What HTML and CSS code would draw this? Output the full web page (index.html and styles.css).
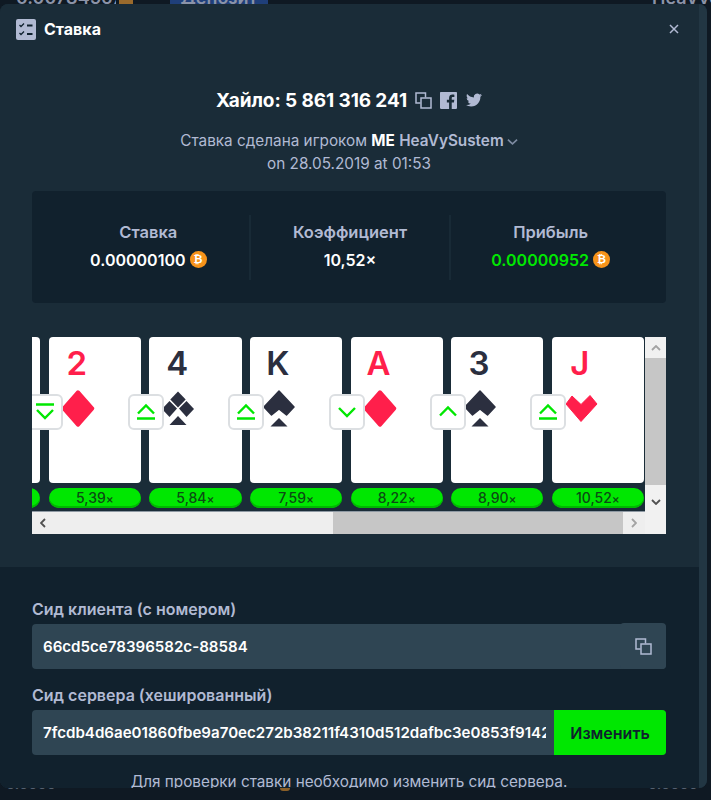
FILE: index.html
```html
<!DOCTYPE html>
<html lang="ru">
<head>
<meta charset="utf-8">
<title>Ставка</title>
<link rel="stylesheet" href="styles.css">
</head>
<body>
<svg class="defs" width="0" height="0" aria-hidden="true">
  <symbol id="diamond" viewBox="0 0 34 37"><path d="M17 2 31.500 18.500 17 35 2.500 18.500Z" fill="currentColor" stroke="currentColor" stroke-width="3.500" stroke-linejoin="round"/></symbol>
  <symbol id="heart" viewBox="0 0 34 37"><path d="M8 6 17 14.500 26 5.500 33 14 17 31.500 2 14Z" fill="currentColor" stroke="currentColor" stroke-width="1" stroke-linejoin="round"/></symbol>
  <symbol id="spade" viewBox="0 0 34 37"><path d="M17 1 32 17 24.500 25 17 19 9.500 25 2 17Z" fill="currentColor" stroke="currentColor" stroke-width="1.500" stroke-linejoin="round"/><path d="M17 28 25.500 36.500H8.500Z" fill="currentColor"/></symbol>
  <symbol id="club" viewBox="0 0 34 37"><g fill="currentColor"><path d="M17 1.500 24.700 9.500 17 17.500 9.300 9.500Z"/><path d="M8.500 11 16 18.500 8.500 27 1 19Z"/><path d="M25.500 11 33 19 25.500 27 18 18.500Z"/><path d="M17 26 25.500 35H8.500Z"/></g></symbol>
  <symbol id="up-bar" viewBox="0 0 36 36"><path d="M10 19.500 18 11.500 26 19.500M9 24.500H27" fill="none" stroke="currentColor" stroke-width="2.400"/></symbol>
  <symbol id="down-bar" viewBox="0 0 36 36"><path d="M10 16 18 24 26 16M9 10.500H27" fill="none" stroke="currentColor" stroke-width="2.400"/></symbol>
  <symbol id="up" viewBox="0 0 36 36"><path d="M10 21.500 18 13.500 26 21.500" fill="none" stroke="currentColor" stroke-width="2.400"/></symbol>
  <symbol id="down" viewBox="0 0 36 36"><path d="M10 14 18 22 26 14" fill="none" stroke="currentColor" stroke-width="2.400"/></symbol>
  <symbol id="copy" viewBox="0 0 17 17"><path d="M5.500 11H1V1H10.500V5.500" fill="none" stroke="currentColor" stroke-width="1.500"/><rect x="6" y="6" width="10" height="10" fill="none" stroke="currentColor" stroke-width="1.500"/></symbol>
</svg>

<div class="backdrop">
  <div class="topbar">
    <span class="balance"><span>0.00784567</span></span>
    <span class="top-coin"></span>
    <span class="deposit"><span>Депозит</span></span>
    <span class="user"><span>HeaVySu</span></span>
  </div>
  <div class="bottombar">
    <span class="bottom-left">0.0000</span>
    <span class="bottom-coin"></span>
    <span class="bottom-right">0.0000</span>
  </div>
</div>

<main class="modal">
  <div class="modal-body">
    <div class="upper">
      <header class="modal-head">
        <div class="modal-title">
          <svg class="title-icon" viewBox="0 0 20 21">
            <rect width="20" height="21" rx="2" fill="#b1bad3"/>
            <path d="M3.500 6 5 7.500 8 4.500M3.500 14 5 15.500 8 12.500" fill="none" stroke="#0f212e" stroke-width="1.300"/>
            <path d="M11 6.500H16.500M11 15H16.500" stroke="#0f212e" stroke-width="2"/>
          </svg>
          <span>Ставка</span>
        </div>
        <svg class="close" viewBox="0 0 10 10"><path d="M1 1 9 9M9 1 1 9" stroke="#b1bad3" stroke-width="1.500"/></svg>
      </header>

      <div class="game-line">
        <h1>Хайло: 5 861 316 241</h1>
        <svg class="share"><use href="#copy"/></svg>
        <svg class="share" viewBox="0 0 24 24"><path fill="#b1bad3" d="M22.675 0H1.325C.593 0 0 .593 0 1.325v21.351C0 23.407.593 24 1.325 24H12.820v-9.294H9.692v-3.622h3.128V8.413c0-3.100 1.893-4.788 4.659-4.788 1.325 0 2.463.099 2.795.143v3.240l-1.918.001c-1.504 0-1.795.715-1.795 1.763v2.313h3.587l-.467 3.622h-3.120V24h6.116c.730 0 1.323-.593 1.323-1.324V1.325C24 .593 23.407 0 22.675 0z"/></svg>
        <svg class="share share-tw" viewBox="0 0 24 24"><path fill="#b1bad3" d="M23.953 4.570a10 10 0 01-2.825.775 4.958 4.958 0 002.163-2.723c-.951.555-2.005.959-3.127 1.184a4.920 4.920 0 00-8.384 4.482C7.690 8.095 4.067 6.130 1.640 3.162a4.822 4.822 0 00-.666 2.475c0 1.710.870 3.213 2.188 4.096a4.904 4.904 0 01-2.228-.616v.060a4.923 4.923 0 003.946 4.827 4.996 4.996 0 01-2.212.085 4.936 4.936 0 004.604 3.417 9.867 9.867 0 01-6.102 2.105c-.390 0-.779-.023-1.170-.067a13.995 13.995 0 007.557 2.209c9.053 0 13.998-7.496 13.998-13.985 0-.210 0-.420-.015-.630A9.935 9.935 0 0024 4.590z"/></svg>
      </div>

      <p class="byline">Ставка сделана игроком <b class="me">ME</b> <b class="player">HeaVySustem</b><svg class="caret" viewBox="0 0 12 8"><path d="M1 1.500 6 6 11 1.500" fill="none" stroke="#7c8aa0" stroke-width="1.800"/></svg></p>
      <p class="date">on 28.05.2019 at 01:53</p>

      <section class="stats">
        <div class="stat">
          <div class="stat-label">Ставка</div>
          <div class="stat-value">0.00000100<span class="coin">₿</span></div>
        </div>
        <div class="stat">
          <div class="stat-label">Коэффициент</div>
          <div class="stat-value">10,52×</div>
        </div>
        <div class="stat">
          <div class="stat-label">Прибыль</div>
          <div class="stat-value stat-win">0.00000952<span class="coin">₿</span></div>
        </div>
      </section>

      <section class="scroller">
        <div class="hand">
          <div class="slot">
            <div class="card"><span class="rank">9</span><svg class="suit"><use href="#spade"/></svg></div>
            <div class="pill">4,85<small>×</small></div>
          </div>
          <div class="slot">
            <div class="card red"><span class="rank">2</span><svg class="suit"><use href="#diamond"/></svg>
              <span class="guess"><svg><use href="#down-bar"/></svg></span></div>
            <div class="pill">5,39<small>×</small></div>
          </div>
          <div class="slot">
            <div class="card"><span class="rank">4</span><svg class="suit"><use href="#club"/></svg>
              <span class="guess"><svg><use href="#up-bar"/></svg></span></div>
            <div class="pill">5,84<small>×</small></div>
          </div>
          <div class="slot">
            <div class="card"><span class="rank">K</span><svg class="suit"><use href="#spade"/></svg>
              <span class="guess"><svg><use href="#up-bar"/></svg></span></div>
            <div class="pill">7,59<small>×</small></div>
          </div>
          <div class="slot">
            <div class="card red"><span class="rank">A</span><svg class="suit"><use href="#diamond"/></svg>
              <span class="guess"><svg><use href="#down"/></svg></span></div>
            <div class="pill">8,22<small>×</small></div>
          </div>
          <div class="slot">
            <div class="card"><span class="rank">3</span><svg class="suit"><use href="#spade"/></svg>
              <span class="guess"><svg><use href="#up"/></svg></span></div>
            <div class="pill">8,90<small>×</small></div>
          </div>
          <div class="slot">
            <div class="card red"><span class="rank">J</span><svg class="suit"><use href="#heart"/></svg>
              <span class="guess"><svg><use href="#up-bar"/></svg></span></div>
            <div class="pill">10,52<small>×</small></div>
          </div>
        </div>
        <div class="vbar">
          <span class="sb-btn"><svg viewBox="0 0 10 6"><path d="M1 5 5 1 9 5" fill="none" stroke="#a3a3a3" stroke-width="1.800"/></svg></span>
          <span class="vthumb"></span>
          <span class="sb-end"><svg viewBox="0 0 10 6"><path d="M1 1 5 5 9 1" fill="none" stroke="#505050" stroke-width="1.800"/></svg></span>
        </div>
        <div class="hbar">
          <span class="sb-left"><svg viewBox="0 0 6 10"><path d="M5 1 1 5 5 9" fill="none" stroke="#505050" stroke-width="1.800"/></svg></span>
          <span class="hthumb"></span>
          <span class="sb-right"><svg viewBox="0 0 6 10"><path d="M1 1 5 5 1 9" fill="none" stroke="#a3a3a3" stroke-width="1.800"/></svg></span>
        </div>
        <div class="corner"></div>
      </section>
    </div>

    <div class="lower">
      <label class="field-label">Сид клиента (с номером)</label>
      <div class="field">
        <span class="field-text">66cd5ce78396582c-88584</span>
        <span class="field-copy"><svg><use href="#copy"/></svg></span>
      </div>
      <label class="field-label field-label-2">Сид сервера (хешированный)</label>
      <div class="field">
        <span class="field-text">7fcdb4d6ae01860fbe9a70ec272b38211f4310d512dafbc3e0853f91423a7e5c</span>
        <button class="change">Изменить</button>
      </div>
      <p class="note">Для проверки ставки необходимо изменить сид сервера.</p>
    </div>
  </div>
  <div class="modal-rail"></div>
</main>
</body>
</html>
```

FILE: styles.css
```css
* { box-sizing: border-box; }

html, body {
  margin: 0;
  height: 800px;
  overflow: hidden;
  background: #0f1923;
  font-family: Inter, "Noto Sans", sans-serif;
  color: #b1bad3;
}

.defs { position: absolute; }

.backdrop {
  height: 800px;
  display: flex;
  flex-direction: column;
  justify-content: space-between;
  color: #8b93a8;
  font-weight: 600;
}

.topbar {
  display: flex;
  height: 4px;
  padding-left: 16px;
  overflow: hidden;
  font-size: 18px;
  line-height: 18px;
}
.topbar > span { flex: none; height: 4px; overflow: hidden; }
.topbar > span > span { display: block; margin-top: -11px; }
.balance { width: 100px; }
.top-coin { width: 14px; margin-left: 3px; background: #9a6a2c; }
.deposit {
  width: 98px;
  margin-left: 37px;
  background: #1f3f7a;
  text-align: center;
}
.user { margin-left: auto; width: 59px; white-space: nowrap; }

.bottombar {
  display: flex;
  height: 12px;
  overflow: hidden;
  font-size: 14px;
  line-height: 14px;
  color: #55606f;
}
.bottom-left { width: 280px; padding-left: 6px; margin-top: -11px; }
.bottom-coin { width: 10px; height: 3px; margin-left: 0; border-radius: 0 0 5px 5px; background: #8a5f28; }
.bottom-right { margin-left: auto; width: 63px; margin-top: -11px; }

.modal {
  position: absolute;
  left: 0;
  top: 4px;
  width: 707px;
  height: 784px;
  border-radius: 8px;
  overflow: hidden;
  display: flex;
  background: #1a2c38;
}

.modal-body { width: 699px; flex: none; }
.modal-rail { flex: 1; background: #223643; }

.upper { height: 563px; padding: 0 33px 0 32px; background: #1a2c38; }

.modal-head {
  display: flex;
  justify-content: space-between;
  align-items: center;
  height: 50px;
  margin: 0 -17px 0 -16px;
}
.modal-title {
  display: flex;
  align-items: center;
  gap: 8px;
  font-size: 16px;
  font-weight: 700;
  color: #fff;
}
.title-icon { width: 20px; height: 21px; }
.close { width: 10px; height: 10px; margin-right: 4px; }

.game-line {
  display: flex;
  justify-content: center;
  align-items: center;
  height: 20px;
  margin-top: 36px;
  color: #b1bad3;
}
.game-line h1 {
  margin: 0 8px 0 0;
  font-size: 19px;
  font-weight: 700;
  letter-spacing: -0.1px;
  color: #fff;
}
.share { width: 17px; height: 17px; margin-right: 8px; }
.share-tw { width: 16px; height: 16px; margin: 0 0 0 1px; }

.byline, .date {
  margin: 0;
  text-align: center;
  font-size: 15.300px;
  line-height: 22px;
}
.byline { margin-top: 20px; }
.date { margin-top: 1px; }
.me { color: #fff; font-weight: 700; }
.player { font-weight: 600; }
.caret { width: 11px; height: 8px; margin-left: 3px; }

.stats {
  display: grid;
  grid-template-columns: repeat(3, 1fr);
  align-items: center;
  height: 112px;
  margin-top: 16px;
  padding: 23px 16px;
  background: #11212d;
  border-radius: 4px;
}
.stat { text-align: center; height: 65px; padding-top: 8px; }
.stat + .stat { border-left: 2px solid #182a36; }
.stat-label { font-size: 16.500px; font-weight: 600; line-height: 18px; }
.stat-value {
  display: flex;
  justify-content: center;
  align-items: center;
  margin-top: 10px;
  font-size: 16px;
  font-weight: 600;
  line-height: 18px;
  color: #fff;
}
.stat-win { color: #00e701; }

.coin {
  display: inline-block;
  flex: none;
  width: 17px;
  height: 17px;
  margin-left: 4px;
  border-radius: 50%;
  background: #f7931a;
  color: #fff;
  font: 700 11px/17px "DejaVu Sans", sans-serif;
  text-align: center;
}

.scroller {
  display: grid;
  grid-template-columns: 613px 21px;
  grid-template-rows: 175px 22px;
  margin-top: 34px;
}

.hand {
  display: flex;
  justify-content: flex-end;
  gap: 8.300px;
  padding-right: 1px;
  overflow: hidden;
  border-bottom: 1px solid #8e99a3;
}
.slot { flex: none; width: 92.300px; }

.card {
  position: relative;
  height: 146px;
  padding-top: 5px;
  display: flex;
  flex-direction: column;
  background: #fff;
  border-radius: 4px;
  color: #2b2f3f;
}
.card.red { color: #ff1f4b; }
.rank {
  width: 56px;
  text-align: center;
  font-size: 33px;
  font-weight: 600;
  line-height: 42px;
}
.suit { width: 34px; height: 37px; margin: 6px 0 0 12px; }

.guess {
  position: absolute;
  left: -21.500px;
  top: 57px;
  width: 36px;
  height: 36px;
  background: #fff;
  border: 2px solid #dcdfe2;
  border-radius: 6px;
  color: #00e701;
}
.guess svg { display: block; width: 36px; height: 36px; margin: -2px; }

.pill {
  height: 20px;
  margin-top: 5px;
  background: #00e701;
  border-radius: 10px;
  box-shadow: inset 0 -2px 0 #00b801;
  color: #0c4a14;
  text-align: center;
  font-size: 14px;
  font-weight: 500;
  line-height: 19px;
}
.pill small { font-size: 12px; }

.vbar {
  display: flex;
  flex-direction: column;
  background: #f1f1f1;
}
.sb-btn { height: 21px; display: flex; align-items: center; justify-content: center; }
.sb-btn svg, .sb-end svg { width: 10px; height: 6px; }
.vthumb { height: 127px; background: #c6c6c6; }
.sb-end { flex: 1; display: flex; align-items: flex-end; justify-content: center; padding-bottom: 7px; }

.hbar {
  display: flex;
  background: #eeeeee;
}
.sb-left { width: 301px; display: flex; align-items: center; padding-left: 8px; }
.sb-left svg, .sb-right svg { width: 6px; height: 10px; }
.hthumb { width: 290px; background: #c6c6c6; }
.sb-right { flex: 1; display: flex; align-items: center; justify-content: center; }
.corner { background: #f1f1f1; }

.lower { height: 221px; padding: 32px 33px 0 32px; background: #11212d; }

.field-label {
  display: block;
  font-size: 16px;
  font-weight: 600;
  line-height: 20px;
}
.field-label-2 { margin-top: 16px; }

.field {
  display: flex;
  align-items: center;
  height: 45px;
  margin-top: 5px;
  background: #2f4553;
  border-radius: 4px;
}
.field-text {
  flex: 1;
  min-width: 0;
  margin: 0 8px 0 11px;
  overflow: hidden;
  white-space: nowrap;
  color: #fff;
  font-size: 15.100px;
  font-weight: 600;
}
.field-copy {
  display: flex;
  align-items: center;
  justify-content: center;
  width: 46px;
  height: 46px;
  margin-top: -1px;
  background: #2f4553;
  border-radius: 4px;
  color: #b1bad3;
}
.field-copy svg { width: 17px; height: 17px; }

.change {
  width: 112px;
  height: 45px;
  border: 0;
  padding: 0;
  background: #00e701;
  border-radius: 0 4px 4px 0;
  color: #0f212e;
  font: 600 16px Inter, "Noto Sans", sans-serif;
}

.note {
  margin: 17px 0 0;
  text-align: center;
  font-size: 15.300px;
  line-height: 20px;
}
```
